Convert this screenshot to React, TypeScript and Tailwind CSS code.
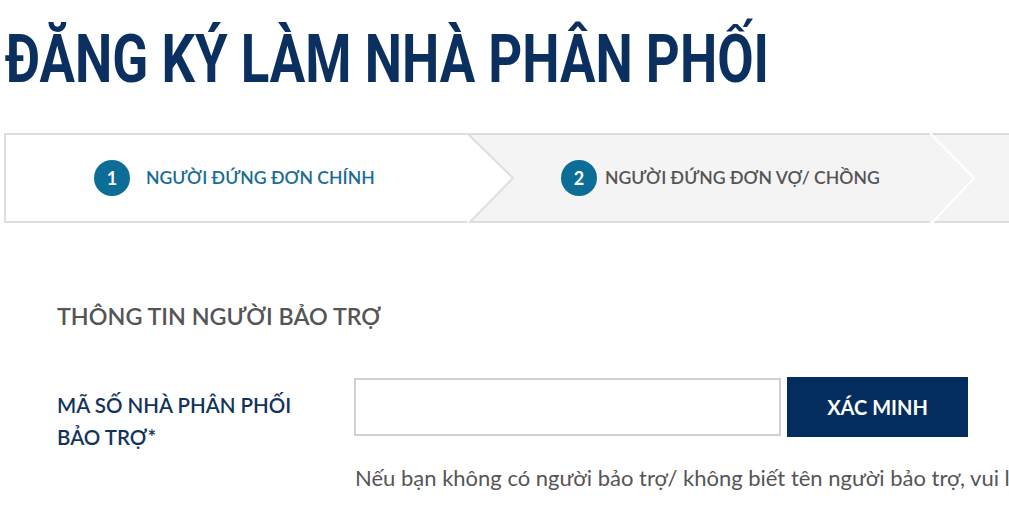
export default function App() {
  return (
    <div className="w-[1009px] h-[510px] overflow-hidden bg-white" style={{ fontFamily: 'Lato, "Noto Sans", sans-serif' }}>
      <h1
        className="mt-[27px] ml-[5px] origin-left scale-x-[0.8] text-[66px] leading-[66px] font-bold text-[#0b2f5e] whitespace-nowrap"
        style={{ fontFamily: 'Roboto, "DejaVu Sans Condensed", sans-serif' }}
      >
        ĐĂNG KÝ LÀM NHÀ PHÂN PHỐI
      </h1>

      <div className="mt-[40px] ml-[4px] flex h-[90px] w-[1200px] border-y-2 border-l-2 border-[#dedede]">
        <div className="relative flex w-[461px] shrink-0 items-center bg-white pl-[88px]">
          <span className="flex h-[36px] w-[36px] items-center justify-center rounded-full bg-[#0c6d97] text-[18px] font-bold text-white">1</span>
          <span className="ml-[16px] text-[17.6px] font-semibold text-[#1a6c95]">NGƯỜI ĐỨNG ĐƠN CHÍNH</span>
          <svg className="absolute left-full top-[-2px] z-10" width="48" height="90" viewBox="0 0 48 90">
            <polygon points="0,0 46,45 2,90 0,90" fill="#ffffff" />
            <polyline points="0,0 46,45 2,90" fill="none" stroke="#dedede" strokeWidth="2" />
          </svg>
        </div>
        <div className="relative flex w-[463px] shrink-0 items-center bg-[#f4f4f4] pl-[94px]">
          <span className="flex h-[36px] w-[36px] items-center justify-center rounded-full bg-[#0c6d97] text-[18px] font-bold text-white">2</span>
          <span className="ml-[8px] text-[17.6px] font-semibold text-[#555555]">NGƯỜI ĐỨNG ĐƠN VỢ/ CHỒNG</span>
          <svg className="absolute left-full top-[-2px] z-10" width="48" height="90" viewBox="0 0 48 90">
            <polygon points="0,0 44,45 2,90 0,90" fill="#f4f4f4" />
            <polyline points="0,0 44,45 2,90" fill="none" stroke="#ffffff" strokeWidth="2" />
          </svg>
        </div>
        <div className="flex-1 bg-[#f4f4f4]" />
      </div>

      <div className="pl-[57px]">
        <h2 className="mt-[79px] text-[23.3px] leading-[28px] font-semibold text-[#555555]">THÔNG TIN NGƯỜI BẢO TRỢ</h2>

        <div className="mt-[47px] flex">
          <label className="w-[297px] shrink-0 pt-[12px] text-[20.5px] leading-[32px] font-semibold text-[#13335e]">
            MÃ SỐ NHÀ PHÂN PHỐI<br />BẢO TRỢ*
          </label>
          <div className="flex flex-col">
            <div className="flex items-center gap-[6px]">
              <input type="text" className="h-[58px] w-[427px] border-2 border-[#d0d0d0] bg-white px-3 outline-none" />
              <button className="h-[60px] w-[181px] bg-[#022d5e] text-[20px] font-bold text-white">XÁC MINH</button>
            </div>
            <p className="mt-[24px] ml-[1px] whitespace-nowrap text-[22px] text-[#555555]">
              Nếu bạn không có người bảo trợ/ không biết tên người bảo trợ, vui lòng liên hệ
            </p>
          </div>
        </div>
      </div>
    </div>
  );
}
